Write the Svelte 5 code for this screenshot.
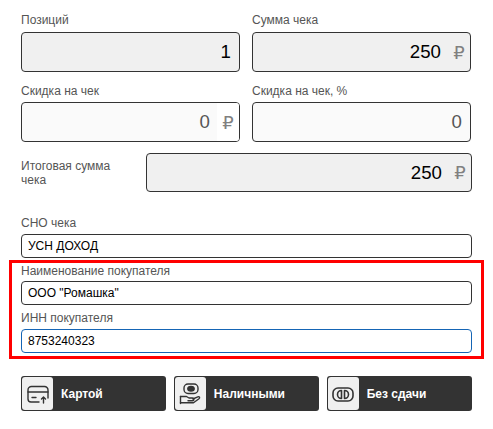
<script>
  const buttons = [
    { label: 'Картой', icon: 'card' },
    { label: 'Наличными', icon: 'cash' },
    { label: 'Без сдачи', icon: 'exact' }
  ]
</script>

<div class="page">
  <div class="totals">
    <div class="field">
      <span class="label">Позиций</span>
      <div class="box big readonly"><span class="value">1</span></div>
    </div>
    <div class="field">
      <span class="label">Сумма чека</span>
      <div class="box big readonly"><span class="value">250</span><span class="cur">₽</span></div>
    </div>
    <div class="field">
      <span class="label tight">Скидка на чек</span>
      <div class="box big editable"><span class="value muted">0</span><span class="cur white">₽</span></div>
    </div>
    <div class="field">
      <span class="label tight">Скидка на чек, %</span>
      <div class="box big editable"><span class="value muted">0</span></div>
    </div>
  </div>

  <div class="result">
    <span class="label result-label">Итоговая сумма чека</span>
    <div class="box result-box readonly"><span class="value">250</span><span class="cur">₽</span></div>
  </div>

  <div class="plain">
    <span class="label sno">СНО чека</span>
    <div class="box text">УСН ДОХОД</div>
  </div>

  <div class="buyer">
    <span class="label">Наименование покупателя</span>
    <div class="box text">ООО "Ромашка"</div>
    <span class="label second">ИНН покупателя</span>
    <div class="box text focused">8753240323</div>
  </div>

  <div class="actions">
    {#each buttons as b}
      <button class="pay">
        <span class="icon">
          <svg width="24" height="24" viewBox="0 0 24 24" fill="none" stroke="#333" stroke-width="1.4" stroke-linecap="round" stroke-linejoin="round">
            {#if b.icon === 'card'}
              <path d="M13 20H5a3 3 0 0 1-3-3V8a3.5 3.5 0 0 1 3.5-3.5h13A3.5 3.5 0 0 1 22 8v8" />
              <path d="M2 10h20" />
              <path d="M6 15.500h4" />
              <path d="M17.500 21v-6M15.500 17l2-2 2 2" />
            {:else if b.icon === 'cash'}
              <rect x="6" y="2" width="14" height="9.500" rx="4" />
              <ellipse cx="13" cy="6.800" rx="3.200" ry="2.300" fill="#333" />
              <path d="M2.500 14.500h6l2.500 1.500h3.500a1.300 1.300 0 0 1 0 2.800H10" />
              <path d="M14.800 17l5-2.200c1.500-.6 2.500 1 1.200 2l-5.500 4H2.500" />
              <path d="M2.500 14.500v7" />
            {:else}
              <rect x="2" y="6" width="20" height="13" rx="5" stroke-width="1.600" />
              <path d="M10.500 8.500a4 4 0 0 0 0 8zM13.500 8.500a4 4 0 0 1 0 8z" stroke-width="1.600" />
            {/if}
          </svg>
        </span>
        <span class="pay-text">{b.label}</span>
      </button>
    {/each}
  </div>
</div>

<style>
  :global(body) {
    margin: 0;
    background: #fff;
    font-family: "Liberation Sans", Arial, sans-serif;
  }
  .page {
    width: 475px;
    margin-left: 9px;
    padding-top: 13px;
    box-sizing: border-box;
  }
  .totals {
    display: grid;
    grid-template-columns: 219px 219px;
    column-gap: 12px;
    row-gap: 12px;
    padding: 0 12px;
  }
  .label {
    display: block;
    font-size: 12px;
    line-height: 14px;
    color: #555;
    margin-bottom: 5px;
  }
  .label.tight { margin-bottom: 4px; }
  .box {
    display: flex;
    align-items: center;
    justify-content: flex-end;
    box-sizing: border-box;
    border: 1px solid #333;
    border-radius: 4px;
    overflow: hidden;
  }
  .big { height: 40px; }
  .readonly { background: #f0f0f0; }
  .editable { background: #fafafa; }
  .value {
    font-size: 18.67px;
    color: #000;
    padding-right: 8px;
  }
  .value.muted { color: #555; }
  .cur {
    align-self: stretch;
    display: flex;
    align-items: center;
    justify-content: center;
    width: 22px;
    margin-left: -1px;
    font-family: "DejaVu Sans", sans-serif;
    font-size: 18px;
    color: #808080;
  }
  .cur.white { background: #fff; }
  .result {
    display: flex;
    align-items: center;
    gap: 12px;
    padding: 0 12px;
    margin-top: 11px;
  }
  .result-label {
    width: 113px;
    margin: 0;
  }
  .result-box {
    flex: 1;
    height: 39px;
  }
  .plain { padding: 0 12px; margin-top: 24px; }
  .sno { margin-bottom: 4px; }
  .text {
    justify-content: flex-start;
    height: 24px;
    padding-left: 6px;
    font-size: 12px;
    color: #000;
  }
  .focused { border-color: #1565b5; }
  .buyer {
    margin-top: 2px;
    border: 3px solid #f00;
    padding: 1px 9px 0;
    height: 99px;
    box-sizing: border-box;
  }
  .buyer .label { margin-bottom: 3px; }
  .buyer .label.second { margin-top: 6px; margin-bottom: 4px; }
  .actions {
    display: grid;
    grid-template-columns: repeat(3, 1fr);
    column-gap: 7.5px;
    padding: 0 12px;
    margin-top: 17px;
  }
  .pay {
    display: flex;
    align-items: center;
    height: 35px;
    padding: 1px;
    border: 0;
    border-radius: 3px;
    background: #333;
    cursor: pointer;
    font-family: inherit;
  }
  .icon {
    width: 31px;
    height: 33px;
    border-radius: 3px;
    background: #f0f0f0;
    display: flex;
    align-items: center;
    justify-content: center;
    flex-shrink: 0;
  }
  .pay-text {
    margin-left: 8px;
    font-size: 12px;
    font-weight: 700;
    color: #fff;
  }
</style>
